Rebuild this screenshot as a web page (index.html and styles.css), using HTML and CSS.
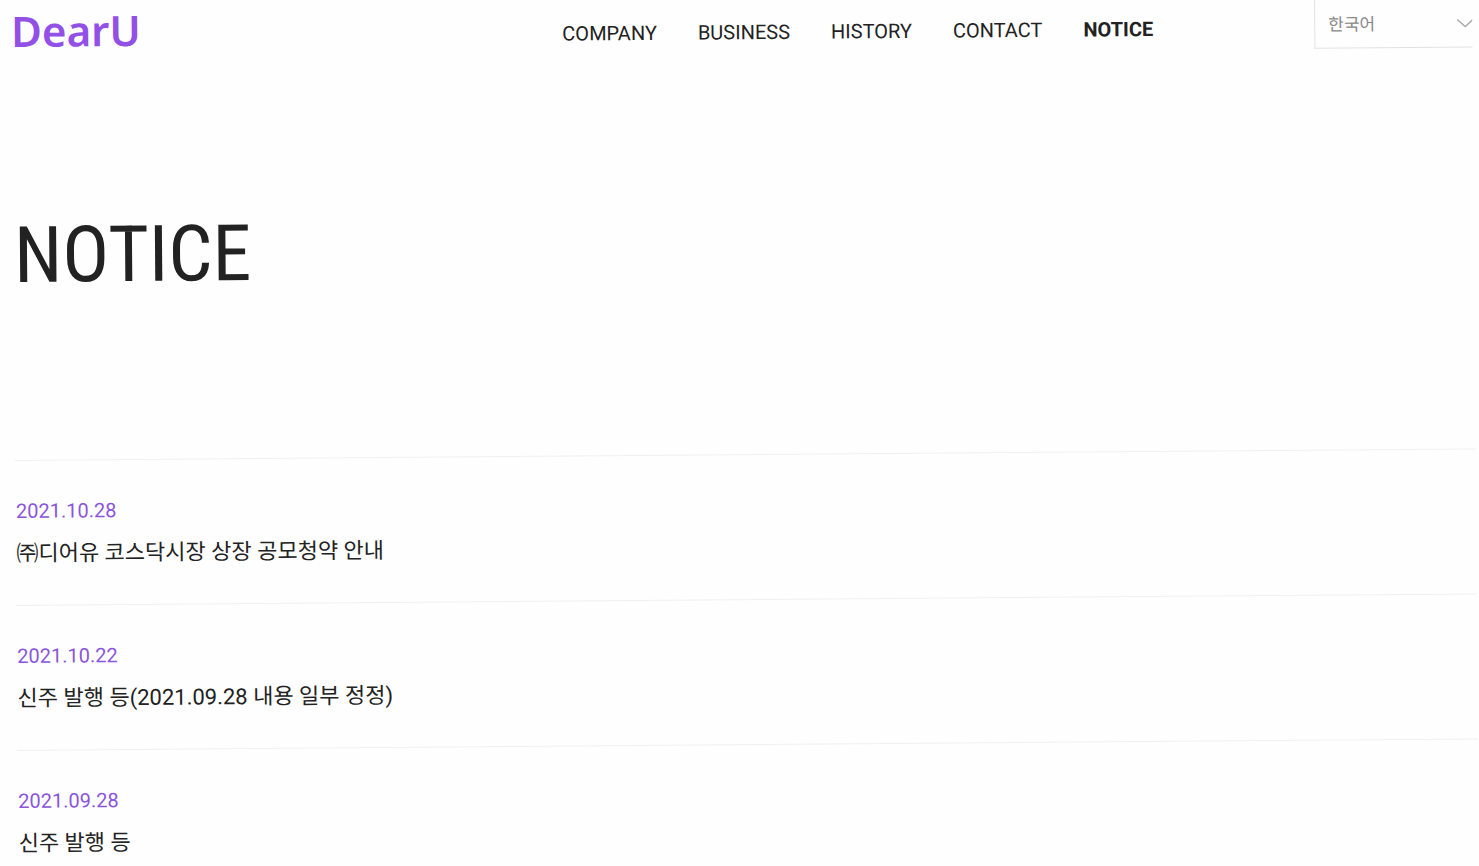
FILE: index.html
```html
<!DOCTYPE html>
<html lang="ko">
<head>
<meta charset="utf-8">
<meta name="viewport" content="width=device-width, initial-scale=1">
<title>DearU - NOTICE</title>
<link rel="stylesheet" href="styles.css">
</head>
<body>
<div class="page">
  <header class="header">
    <a class="logo" href="#">DearU</a>
    <nav class="nav">
      <a href="#">COMPANY</a>
      <a href="#">BUSINESS</a>
      <a href="#">HISTORY</a>
      <a href="#">CONTACT</a>
      <a class="current" href="#" aria-current="page">NOTICE</a>
    </nav>
    <div class="language">
      <select aria-label="언어"><option>한국어</option><option>English</option></select>
      <svg class="chevron" width="16" height="10" viewBox="0 0 16 10" aria-hidden="true"><path d="M1 1l8 7 8-7" fill="none" stroke="#aaa" stroke-width="1.5"/></svg>
    </div>
  </header>
  <main>
    <h1 class="title">NOTICE</h1>
    <ul class="notices">
      <li><a href="#"><time datetime="2021-10-28">2021.10.28</time><span class="subject">㈜디어유 코스닥시장 상장 공모청약 안내</span></a></li>
      <li><a href="#"><time datetime="2021-10-22">2021.10.22</time><span class="subject">신주 발행 등(2021.09.28 내용 일부 정정)</span></a></li>
      <li><a href="#"><time datetime="2021-09-28">2021.09.28</time><span class="subject">신주 발행 등</span></a></li>
    </ul>
  </main>
</div>
</body>
</html>
```
FILE: styles.css
```css
* {
  box-sizing: border-box;
}

body {
  margin: 0;
  background: #fefefe;
  color: #222;
  font-family: Roboto, "Noto Sans CJK KR", sans-serif;
  overflow: hidden;
}

a {
  color: inherit;
  text-decoration: none;
}

/* The whole sheet leans slightly, pivoting on its top left corner. */
.page {
  padding: 10px 7px 0 11px;
  transform: rotate(-0.45deg);
  transform-origin: 0 0;
}

.header {
  display: grid;
  grid-template-columns: 1fr auto 1fr;
  align-items: center;
  height: 48px;
}

.logo {
  align-self: start;
  color: #9250e6;
  font: 600 42px/42px "Noto Sans", sans-serif;
}

.nav {
  display: flex;
  gap: 41px;
  padding: 6px 0 0 232px;
  font-size: 20px;
  line-height: 24px;
}

.nav .current {
  font-weight: 700;
}

.language {
  position: relative;
  justify-self: end;
  width: 158px;
}

.language select {
  display: block;
  width: 100%;
  height: 49px;
  padding: 0 13px;
  appearance: none;
  border: 1px solid #e2e2e2;
  border-top: 0;
  border-right: 0;
  border-radius: 0;
  background: transparent;
  color: #888;
  font: 400 17px/24px "Noto Sans CJK KR", sans-serif;
}

.chevron {
  position: absolute;
  top: 20px;
  right: 0;
  pointer-events: none;
}

.title {
  margin: 0;
  padding: 152px 1px 158px;
  font: 400 78px/92px "Roboto Condensed", Roboto, sans-serif;
}

.notices {
  margin: 0;
  padding: 0;
  list-style: none;
}

.notices li {
  border-top: 1px solid #f0f0f0;
}

.notices a {
  display: flex;
  flex-direction: column;
  gap: 15px;
  padding: 38px 1px 35px;
}

.notices time {
  color: #8a55dc;
  font-size: 20px;
  line-height: 24px;
}

.subject {
  font-size: 22px;
  line-height: 32px;
}
```
